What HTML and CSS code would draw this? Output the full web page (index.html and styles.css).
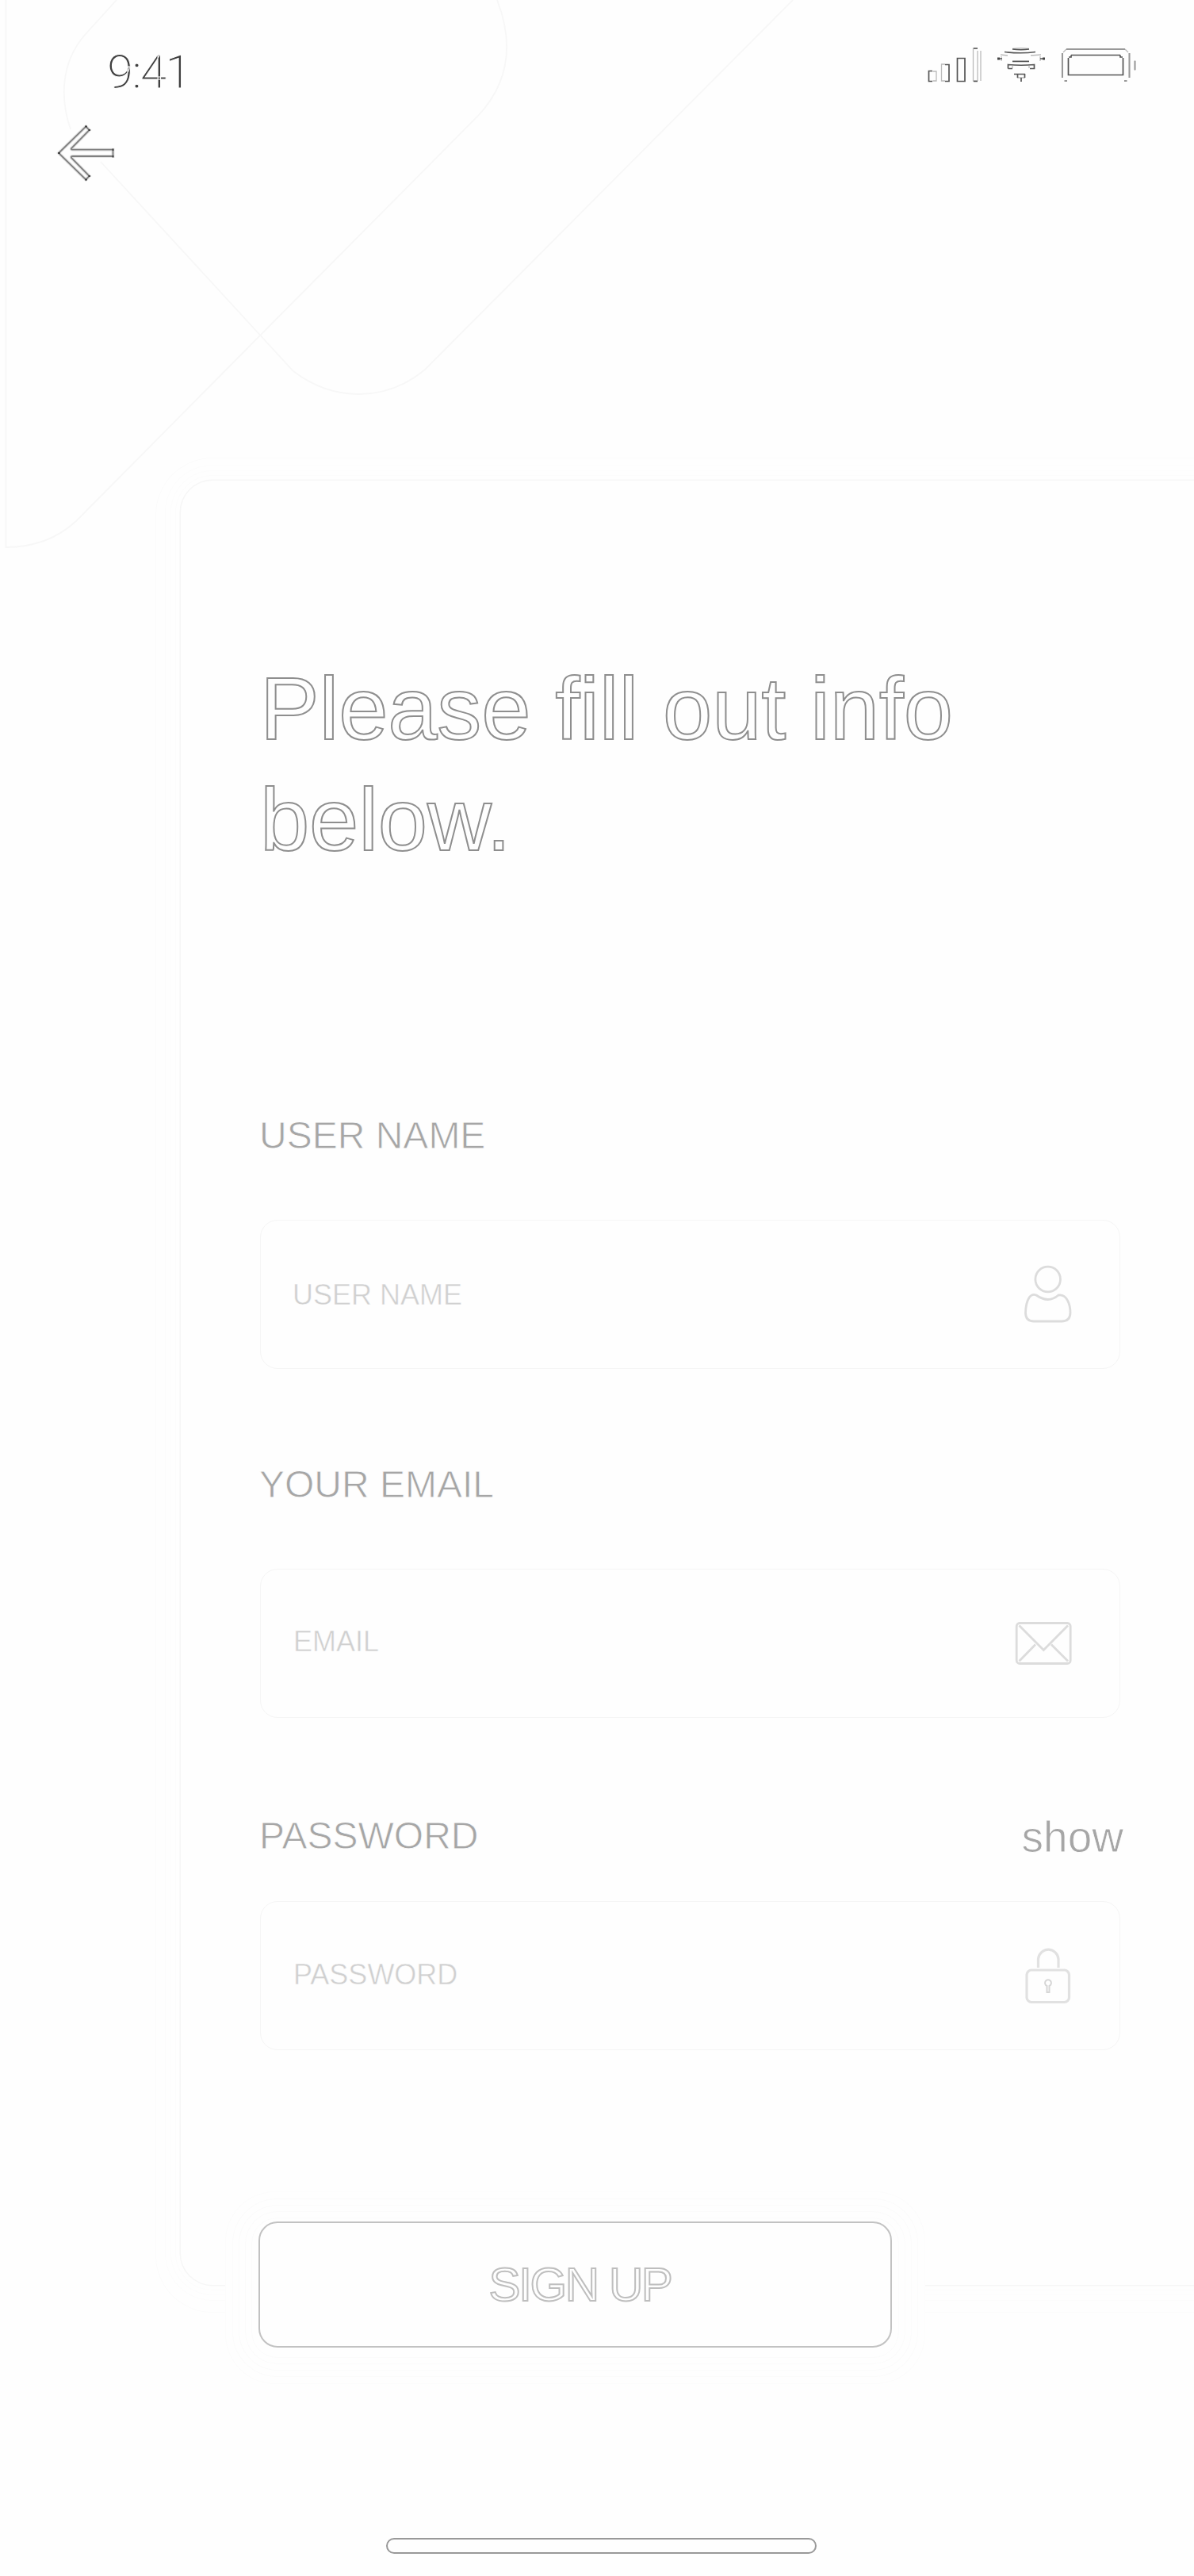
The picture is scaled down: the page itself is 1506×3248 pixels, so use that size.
FILE: index.html
```html
<!DOCTYPE html>
<html lang="en">
<head>
<meta charset="utf-8">
<title>Sign up</title>
<link rel="stylesheet" href="styles.css">
</head>
<body>
<main class="screen">
  <svg class="backdrop" width="1010" height="700" viewBox="0 0 1010 700" aria-hidden="true">
    <path d="M7.500 0V690C40 690 70 681 96 657L326 425L603 146Q660 85 627 0"/>
    <path d="M147 0L107 44C76 80 76 125 89 163M127 204L370 468C420 506 485 508 536 466L1000 0"/>
  </svg>

  <header class="status">
    <span class="time">9:41</span>
    <svg class="indicators" width="270" height="50" viewBox="1168 58 270 50" aria-hidden="true">
      <g class="thin">
        <path d="M1176.500 90H1181V102H1176.500M1192 81H1187.500V102H1192M1233 61H1227.500V102H1233M1237 64V102M1233 64V102"/>
        <path d="M1277 61.500Q1288 60 1298 61.500M1262 69L1271 70M1300 70L1313 69M1263 77V71M1312 77V71M1277 77H1298M1277 83V86M1298 83V86M1283 98H1293"/>
        <path d="M1345 62H1419M1339.500 67V98M1424.500 67V98M1341 66L1345 62M1419 62L1423 66M1431.500 76V89"/>
      </g>
      <g class="dark">
        <path d="M1176 89.500H1171.500V102.500H1176M1192 81.500H1197V102.500H1192M1207.500 73.500H1217V102.500H1207.500ZM1228 102.500H1233M1228 61H1233"/>
        <path d="M1267 65.500Q1288 68 1306 65.500M1277 62Q1288 63.500 1298 62M1258.500 74H1264M1312 74H1317.500M1271.500 86.500V81.500Q1288 83 1304.500 81.500V86.500H1299M1271.500 86.500H1277M1277 77.500H1298M1279 93.500H1293M1283.500 93V98M1292.500 93V98M1288 98V103"/>
        <path d="M1351 69.500H1413M1347.500 73V94.500H1416.500V73M1348 72H1351V69.500M1413 69.500V72H1416"/>
      </g>
      <g class="soft"><path d="M1342.500 102H1346M1418 102H1421.500M1345 62H1419M1340 67V98M1424.500 67V98M1431.500 77V88"/></g>
      <g class="dots"><path d="M1258 74H1261M1315 74H1318"/></g>
    </svg>
  </header>

  <svg class="back" width="76" height="74" viewBox="70 156 76 74" role="img" aria-label="Back">
    <path class="halo" d="M74 193L108.300 159.500L112.700 164L90 187Q89 188.700 92 188.700H142.500V197H92Q89 197 90 199L112.700 222L108.300 226.500Z"/>
    <path class="edge" d="M74 193L108.300 159.500L112.700 164L90 187Q89 188.700 92 188.700H142.500V197H92Q89 197 90 199L112.700 222L108.300 226.500Z"/>
    <path class="corner" d="M107 159.500H110M111.500 164H114M142.500 187.500V190M142.500 196V198.500M111.500 222H114M107 226.500H110M73 193H76"/>
  </svg>

  <section class="card">
    <h1 class="title">Please fill out info<br>below.</h1>
    <div class="label-row"><span class="label">USER NAME</span></div>
    <div class="field">
      <span class="hint hint-user">USER NAME</span>
      <svg class="icon" width="62" height="74" viewBox="1291 1595 62 74" aria-hidden="true">
        <circle cx="1321.700" cy="1613" r="15.800"/>
        <path d="M1307 1633C1317 1640 1327 1640 1335 1633C1346 1631 1350 1646 1350 1655Q1350 1666 1339 1666H1304Q1293.500 1666 1293.500 1655C1294 1640 1299 1630 1307 1633Z"/>
      </svg>
    </div>
    <div class="label-row"><span class="label">YOUR EMAIL</span></div>
    <div class="field">
      <span class="hint hint-email">EMAIL</span>
      <svg class="icon" width="74" height="58" viewBox="1277 2043 74 58" aria-hidden="true">
        <rect x="1280.200" y="2046.500" width="68" height="51" rx="4"/>
        <path d="M1283.500 2049.500L1314.300 2080.500L1345 2049.500M1283.500 2094.500L1304 2073.500M1345 2094.500L1324 2073.500"/>
      </svg>
    </div>
    <div class="label-row last"><span class="label">PASSWORD</span><span class="show">show</span></div>
    <div class="field">
      <span class="hint hint-password">PASSWORD</span>
      <svg class="icon lock" width="62" height="74" viewBox="1291 2455 62 74" aria-hidden="true">
        <path d="M1309.500 2482V2471A12.800 13 0 0 1 1335 2471V2482"/>
        <rect x="1295" y="2485" width="53.500" height="40.500" rx="6"/>
        <path class="keyhole" d="M1320.500 2505A4 4 0 1 1 1323.500 2505V2513H1320.500Z"/>
      </svg>
    </div>
  </section>

  <button class="submit" type="button">SIGN UP</button>
  <div class="home-bar"></div>
</main>
</body>
</html>
```
FILE: styles.css
```css
* { box-sizing: border-box; }

body {
  margin: 0;
  background: #fefefe;
  font-family: "Liberation Sans", Arial, sans-serif;
}

.screen {
  position: relative;
  display: flex;
  flex-direction: column;
  width: 1506px;
  height: 3248px;
  overflow: hidden;
}

.backdrop {
  position: absolute;
  top: 0;
  left: 0;
  fill: none;
  stroke: #f7f7f7;
  stroke-width: 1.8;
}

.status {
  display: flex;
  justify-content: space-between;
  align-items: flex-start;
  height: 154px;
  padding: 58px 68px 0 135px;
}

.time {
  color: #404040;
  font-family: Roboto, sans-serif;
  font-weight: 300;
  font-size: 60px;
  line-height: 66px;
  letter-spacing: -2px;
  -webkit-text-stroke: 1px #fefefe;
}

.indicators { fill: none; }
.thin { stroke: #bbb; stroke-width: 1.3; }
.dark { stroke: #555; stroke-width: 1.7; }
.soft { stroke: #999; stroke-width: 2; }
.dots { stroke: #444; stroke-width: 3; }

.back {
  margin: 2px 0 0 70px;
  flex: none;
  fill: none;
}
.halo { stroke: #e4e4e4; stroke-width: 4; }
.edge { fill: none; stroke: #808080; stroke-width: 1.8; }
.corner { stroke: #444; stroke-width: 2; }

.card {
  height: 2275px;
  margin: 376px 0 0 228px;
  padding: 218px 93px 0 100px;
  flex: none;
  border-radius: 40px 0 0 40px;
  background: #fefefe;
  box-shadow:
    0 0 0 1.5px #f6f6f6,
    0 0 0 6px #fefefe,
    0 0 0 7px #fcfcfc,
    0 0 0 12px #fefefe,
    0 0 0 13px #fcfcfc,
    0 0 0 19px #fefefe,
    0 0 0 20px #fcfcfc,
    0 3px 0 31px #fefefe,
    0 3px 0 32px #fbfbfb;
}

.title {
  margin: 0 0 298px;
  color: transparent;
  font-size: 112px;
  font-weight: 400;
  line-height: 140px;
  letter-spacing: -0.2px;
  white-space: nowrap;
  -webkit-text-stroke: 2px #8e8e8e;
}

.label-row {
  display: flex;
  justify-content: space-between;
  height: 60px;
  margin-bottom: 76px;
  line-height: 60px;
}
.label-row.last { margin-top: 119px; margin-bottom: 52px; }

.label,
.show {
  color: #a6a6a6;
  font-size: 48px;
  -webkit-text-stroke: 0.8px #fefefe;
}
.label { margin-left: -1px; }
.show { font-size: 55px; line-height: 62px; margin-right: -4px; }

.field {
  display: flex;
  align-items: center;
  justify-content: space-between;
  height: 188px;
  margin-bottom: 116px;
  padding: 0 59px 0 40px;
  border: 1px solid #f5f5f5;
  border-radius: 22px;
}

.hint {
  color: #d0d0d0;
  font-size: 36px;
  line-height: 44px;
  -webkit-text-stroke: 0.5px #fefefe;
}
.hint-user { padding-top: 1px; }
.hint-email { padding: 0 0 5px 1px; }
.hint-password { padding: 0 0 3px 1px; }

.icon { fill: none; stroke: #dcdcdc; stroke-width: 2.8; }
.icon.lock { stroke: #e1e1e1; stroke-width: 3.2; }
.icon .keyhole { stroke: #d6d6d6; stroke-width: 2; }

.submit {
  width: 799px;
  height: 159px;
  margin: -80px 0 0 326px;
  padding: 0;
  flex: none;
  border: 2px solid #c2c2c2;
  border-radius: 24px;
  background: #fefefe;
  color: #fefefe;
  font-family: inherit;
  font-size: 60px;
  line-height: 155px;
  letter-spacing: -2.4px;
  text-indent: 12px;
  -webkit-text-stroke: 2px #bebebe;
  box-shadow:
    0 4px 0 8px #fefefe,
    0 4px 0 9px #fbfbfb,
    0 4px 0 16px #fefefe,
    0 4px 0 17px #fbfbfb,
    0 4px 0 24px #fefefe,
    0 4px 0 25px #fbfbfb,
    0 4px 0 32px #fefefe,
    0 4px 0 33px #fbfbfb,
    0 4px 0 41px #fefefe,
    0 4px 0 42px #fcfcfc;
}

.home-bar {
  width: 543px;
  height: 20px;
  margin: 240px 0 0 487px;
  flex: none;
  border: 2px solid #999;
  border-radius: 10px;
}
```
